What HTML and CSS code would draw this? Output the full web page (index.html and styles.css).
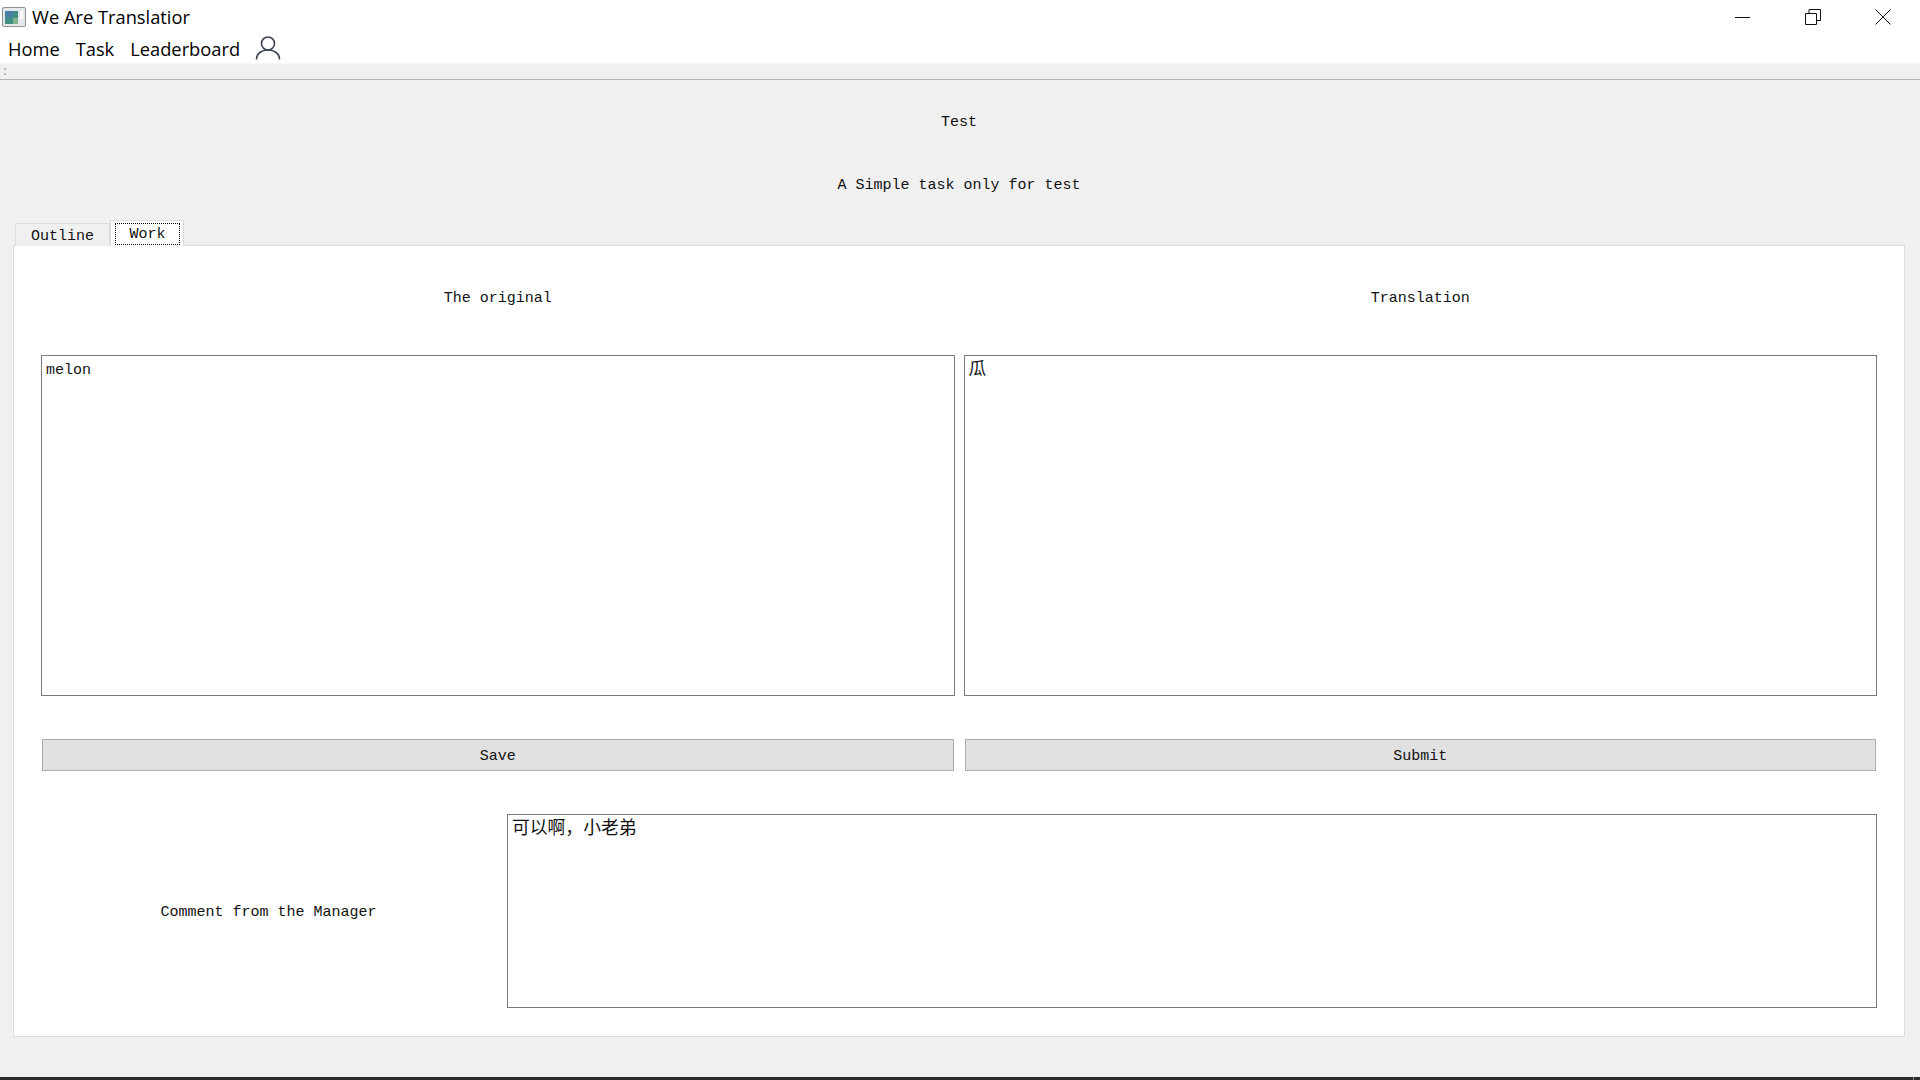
FILE: index.html
```html
<!DOCTYPE html>
<html lang="en">
<head>
    <meta charset="UTF-8">
    <title>We Are Translatior</title>
    <link rel="stylesheet" href="styles.css">
</head>
<body>
    <header class="title-bar">
        <svg class="app-icon" width="24" height="20" viewBox="0 0 24 20">
            <rect x="0.5" y="0.5" width="23" height="19" rx="1.5" fill="#e4e8ea" stroke="#8b9298"/>
            <rect x="3" y="4" width="13" height="13" fill="#3f8f83"/>
            <rect x="3" y="4" width="8" height="6" fill="#4a7fa3"/>
            <rect x="11" y="11" width="5" height="6" fill="#7fb58f"/>
            <rect x="18" y="4" width="3" height="8" fill="#fff"/>
        </svg>
        <span class="app-title">We Are Translatior</span>
        <div class="window-controls">
            <svg width="16" height="16" viewBox="0 0 16 16"><path d="M0 8.5h15" stroke="#111" fill="none"/></svg>
            <svg width="16" height="16" viewBox="0 0 16 16"><path d="M0.5 4.500h11v11h-11zM4 4.500v-4h11.500v11h-4" stroke="#111" fill="none"/></svg>
            <svg width="16" height="16" viewBox="0 0 16 16"><path d="M0.500 0.500l15 15M15.500 0.500l-15 15" stroke="#111" fill="none"/></svg>
        </div>
    </header>

    <nav class="menu-bar">
        <a>Home</a>
        <a>Task</a>
        <a>Leaderboard</a>
        <svg class="user-icon" width="26" height="26" viewBox="0 0 26 26">
            <circle cx="13" cy="8.500" r="6.500" fill="none" stroke="#3d4450" stroke-width="1.600"/>
            <path d="M1.500 24.500c0-6 5-9.500 11.500-9.500s11.500 3.500 11.500 9.500" fill="none" stroke="#3d4450" stroke-width="1.600"/>
        </svg>
    </nav>

    <div class="tool-bar"><span class="grip"></span></div>

    <main class="content">
        <div class="heading">Test</div>
        <div class="heading">A Simple task only for test</div>

        <div class="tabs">
            <div class="tab">Outline</div>
            <div class="tab tab-active"><span class="tab-focus">Work</span></div>
        </div>

        <section class="panel">
            <div class="work-grid">
                <div class="col-label">The original</div>
                <div class="col-label">Translation</div>
                <textarea class="field field-main" readonly>melon</textarea>
                <textarea class="field field-main field-cjk" readonly>瓜</textarea>
                <button class="action">Save</button>
                <button class="action">Submit</button>
            </div>
            <div class="comment-row">
                <div class="comment-label">Comment from the Manager</div>
                <textarea class="field field-cjk" readonly>可以啊，小老弟</textarea>
            </div>
        </section>
    </main>

    <div class="task-strip"><span class="strip-mark"></span></div>
</body>
</html>
```

FILE: styles.css
```css
* {
    margin: 0;
    padding: 0;
    box-sizing: border-box;
}

body {
    width: 1920px;
    height: 1080px;
    display: flex;
    flex-direction: column;
    overflow: hidden;
    background: #f0f0f0;
    color: #111;
    font-family: "Liberation Mono", "Noto Sans CJK SC", monospace;
    font-size: 15px;
}

.title-bar {
    height: 33px;
    display: flex;
    align-items: center;
    padding: 0 0 0 2px;
    background: #fff;
}

.app-icon {
    margin-right: 6px;
    margin-top: 1px;
}

.app-title,
.menu-bar {
    font-family: "Open Sans", "Noto Sans", sans-serif;
    font-size: 18.3px;
    color: #000;
}

.window-controls {
    margin-left: auto;
    margin-right: 29px;
    display: flex;
    gap: 54px;
}

.menu-bar {
    height: 31px;
    display: flex;
    align-items: center;
    gap: 16px;
    padding: 0 0 0 8px;
    background: #fff;
    border-bottom: 1px solid #f7f7f7;
}

.user-icon {
    margin-left: -1px;
}

.tool-bar {
    height: 16px;
    flex: none;
    border-bottom: 1px solid #b4b4b4;
    padding: 4px 0 0 4px;
}

.grip {
    display: block;
    width: 2px;
    height: 7px;
    border-top: 2px dotted #bbb;
    border-bottom: 2px dotted #bbb;
}

.content {
    flex: 1;
    padding: 10px 15px 0 13px;
}

.heading {
    height: 63px;
    line-height: 65px;
    text-align: center;
}

.tabs {
    display: flex;
    align-items: flex-end;
    height: 25px;
    margin-top: 5px;
    margin-bottom: -1px;
    padding-left: 2px;
    position: relative;
    z-index: 1;
}

.tab {
    width: 95px;
    height: 23px;
    line-height: 26px;
    text-align: center;
    background: #f0f0f0;
    border: 1px solid #dcdcdc;
    border-bottom: none;
}

.tab-active {
    width: 74px;
    height: 26px;
    padding: 2px 3px 0 4px;
    line-height: 21px;
    background: #fff;
}

.tab-focus {
    display: block;
    height: 22px;
    border: 1px dotted #000;
}

.panel {
    height: 792px;
    background: #fff;
    border: 1px solid #dcdcdc;
    padding: 31px 27px 28px;
}

.work-grid {
    display: grid;
    grid-template-columns: 1fr 1fr;
    grid-template-rows: 78px 341px 75px;
    column-gap: 9px;
}

.col-label {
    height: 40px;
    line-height: 44px;
    text-align: center;
}

.field {
    display: block;
    width: 100%;
    height: 100%;
    border: 1px solid #7a7a7a;
    border-radius: 0;
    outline: none;
    resize: none;
    overflow: hidden;
    padding: 6px 4px;
    font: inherit;
    line-height: 18px;
    color: #111;
    background: #fff;
}

.field-cjk {
    font-size: 17.8px;
    line-height: 18px;
    padding-top: 5px;
}

.action {
    margin: 43px 1px 0;
    height: 32px;
    padding-top: 2px;
    background: #e1e1e1;
    border: 1px solid #adadad;
    font: inherit;
    color: #111;
}

.comment-row {
    display: grid;
    grid-template-columns: 455px 1fr;
    column-gap: 11px;
    height: 194px;
    margin-top: 43px;
}

.comment-label {
    align-self: center;
    text-align: center;
    padding-top: 2px;
}

.task-strip {
    height: 3px;
    flex: none;
    background: #2d2d2d;
    position: relative;
}

.strip-mark {
    position: absolute;
    right: 6px;
    top: 0;
    width: 1px;
    height: 3px;
    background: #8a8a8a;
}
```
